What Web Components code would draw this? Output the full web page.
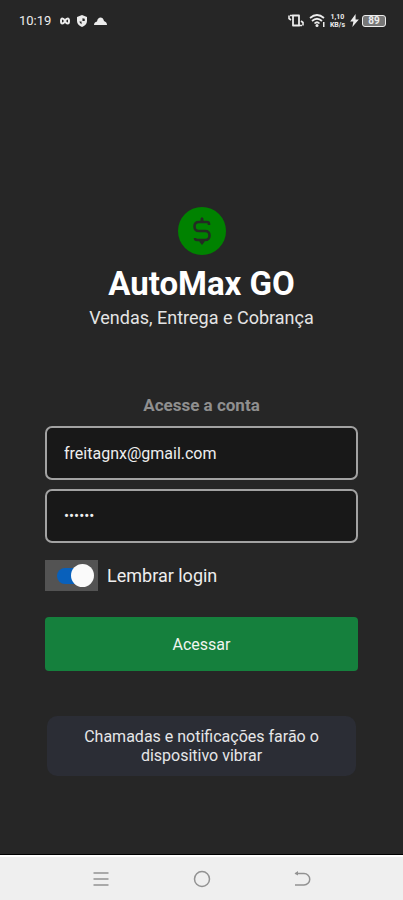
<!DOCTYPE html>
<html lang="pt-BR">
<head>
<meta charset="utf-8">
<meta name="viewport" content="width=device-width, initial-scale=1">
<title>AutoMax GO</title>
<style>
    body {
        margin: 0;
        background: #262626;
        color: #fff;
        font-family: Roboto, "Liberation Sans", sans-serif;
    }
</style>
</head>
<body>
<login-screen></login-screen>
<script>
class StatusBar extends HTMLElement {
    constructor() {
        super();
        this.attachShadow({ mode: 'open' });
        this.shadowRoot.innerHTML = `
            <style>
                :host {
                    display: flex;
                    justify-content: space-between;
                    align-items: center;
                    height: 41px;
                    padding: 0 17px 0 19px;
                    color: #ececec;
                }
                div { display: flex; align-items: center; gap: 5px; }
                .left { gap: 7px; }
                time { font-size: 13px; margin-right: 2px; }
                svg { display: block; fill: currentColor; }
                .rate {
                    flex-direction: column;
                    gap: 0;
                    font-size: 7px;
                    font-weight: bold;
                    line-height: 8px;
                }
                .battery {
                    box-sizing: border-box;
                    width: 24px;
                    height: 12px;
                    border: 1px solid #ececec;
                    border-radius: 3px;
                    background: #777;
                    justify-content: center;
                    font-size: 10px;
                    font-weight: bold;
                }
                .power { gap: 3px; }
            </style>
            <div class="left">
                <time>10:19</time>
                <svg width="10" height="8" viewBox="0 0 10 8"><path fill="none" stroke="currentColor" stroke-width="2" d="M5 4C4 2 3 1.500 2.300 1.500 1.500 1.500 1 2.500 1 4s.5 2.500 1.300 2.500C3 6.500 4 6 5 4s2-2.500 2.700-2.500C8.500 1.500 9 2.500 9 4s-.5 2.500-1.300 2.500C7 6.500 6 6 5 4z"/></svg>
                <svg width="10" height="12" viewBox="0 0 11 13"><path d="M5.500 0 11 2v4.500c0 3-2.500 5.500-5.500 6.500C2.500 12 0 9.500 0 6.500V2z"/><path fill="#262626" d="M6 3.500 8.500 4v2.500H6zM5 7v3C4 9.200 3 8.500 2.600 7z"/></svg>
                <svg width="13" height="8" viewBox="0 0 13 8"><path d="M0 8Q0 5 3 4.500C3.500 1.500 5 .5 6.500.5S9.500 1.500 10 4Q13 5 13 8z"/></svg>
            </div>
            <div>
                <svg width="16" height="13" viewBox="0 0 16 13"><path fill="none" stroke="currentColor" stroke-width="1.800" stroke-linejoin="round" d="M5 1.500h6v10H5z"/><path fill="none" stroke="currentColor" stroke-width="1.600" d="M1 1.500v3L3 6M5 1.500H2M15 11.500v-3L13 7M11 11.500h3"/></svg>
                <svg width="16" height="13" viewBox="0 0 16 13"><path fill="none" stroke="currentColor" stroke-width="1.700" d="M1 4Q8-2 15 4M3 7Q8 2.500 13 7M5.500 9.500Q8 7 10.500 9.500"/><circle cx="8" cy="11.500" r="1.500"/><path d="M14 8h1.500v5H14z"/></svg>
                <div class="rate"><span>1,10</span><span>KB/s</span></div>
                <div class="power">
                    <svg width="9" height="13" viewBox="0 0 8 12"><path d="M5 0 0 7h3l-1 5 6-7H5z"/></svg>
                    <div class="battery">89</div>
                </div>
            </div>
        `;
    }
}

class BrandHeader extends HTMLElement {
    constructor() {
        super();
        this.attachShadow({ mode: 'open' });
        this.shadowRoot.innerHTML = `
            <style>
                :host { display: flex; flex-direction: column; align-items: center; }
                svg { display: block; width: 48px; height: 48px; }
                h1 { margin: 7px 0 0; font-size: 33px; line-height: 44px; }
                p { margin: 0; font-size: 18px; line-height: 24px; color: #e4e4e4; }
            </style>
            <svg viewBox="0 0 48 48" aria-hidden="true">
                <circle cx="24" cy="24" r="24" fill="#008200"/>
                <path fill="none" stroke="#232b23" stroke-width="2.600" stroke-linejoin="round" d="M31 18v-1q0-2-2-2H21q-4.500 0-4.500 4.500T21 24h6q4.500 0 4.500 4.500T27 33H19q-2 0-2-2"/>
                <path fill="#232b23" d="M22.500 15v-3.500L24 10l1.500 1.500V15zM21.500 33h5v2L24 38l-2.500-3z"/>
            </svg>
            <h1><slot name="name"></slot></h1>
            <p><slot></slot></p>
        `;
    }
}

class TextField extends HTMLElement {
    constructor() {
        super();
        this.attachShadow({ mode: 'open' });
    }

    connectedCallback() {
        this.shadowRoot.innerHTML = `
            <style>
                :host { display: block; }
                input {
                    display: block;
                    box-sizing: border-box;
                    width: 100%;
                    height: 54px;
                    padding: 0 17px;
                    border: 2px solid #a2a2a2;
                    border-radius: 7px;
                    outline: none;
                    background: #181818;
                    color: #eee;
                    font: 16px Roboto, "Liberation Sans", sans-serif;
                }
                input[type=password] { font-size: 15px; }
            </style>
            <input type="${this.getAttribute('type')}" value="${this.getAttribute('value')}" aria-label="${this.getAttribute('label')}">
        `;
    }
}

class ToggleSwitch extends HTMLElement {
    constructor() {
        super();
        this.attachShadow({ mode: 'open' });
        this.shadowRoot.innerHTML = `
            <style>
                :host { display: block; }
                label { display: flex; align-items: center; gap: 9px; font-size: 18px; color: #eee; }
                input {
                    appearance: none;
                    display: flex;
                    align-items: center;
                    box-sizing: border-box;
                    width: 53px;
                    height: 31px;
                    margin: 0;
                    padding: 0 4px 0 12px;
                    background: #535353;
                }
                input::before {
                    content: "";
                    width: 26px;
                    height: 16px;
                    border-radius: 8px;
                    background: #0860bb;
                }
                input::after {
                    content: "";
                    width: 23px;
                    height: 23px;
                    margin-left: -12px;
                    border-radius: 50%;
                    flex: none;
                    background: #fafafa;
                }
            </style>
            <label><input type="checkbox" role="switch" checked><slot></slot></label>
        `;
    }
}

class PrimaryButton extends HTMLElement {
    constructor() {
        super();
        this.attachShadow({ mode: 'open' });
        this.shadowRoot.innerHTML = `
            <style>
                :host { display: block; }
                button {
                    display: block;
                    width: 100%;
                    height: 54px;
                    border: 0;
                    border-radius: 4px;
                    background: #15803d;
                    color: #f0f5f0;
                    font: 16px Roboto, "Liberation Sans", sans-serif;
                }
            </style>
            <button type="button"><slot></slot></button>
        `;
    }
}

class ToastMessage extends HTMLElement {
    constructor() {
        super();
        this.attachShadow({ mode: 'open' });
        this.shadowRoot.innerHTML = `
            <style>
                :host {
                    display: block;
                    padding: 11px 32px;
                    border-radius: 10px;
                    background: #2b2d35;
                    color: #e6e6e8;
                    font-size: 16px;
                    line-height: 19px;
                    text-align: center;
                }
            </style>
            <slot></slot>
        `;
    }
}

class NavBar extends HTMLElement {
    constructor() {
        super();
        this.attachShadow({ mode: 'open' });
        this.shadowRoot.innerHTML = `
            <style>
                :host {
                    display: grid;
                    grid-template-columns: repeat(3, 25%);
                    justify-content: center;
                    height: 43px;
                    border-top: 2px solid #fff;
                    background: #efefef;
                    box-shadow: 0 -1px #000;
                }
                button { display: grid; place-items: center; padding: 0; border: 0; background: none; }
                svg { width: 18px; height: 18px; fill: none; stroke: #929292; stroke-width: 1.500; }
            </style>
            <button aria-label="Recentes"><svg viewBox="0 0 18 18"><path d="M1.500 3h15M1.500 9h15M1.500 15h15"/></svg></button>
            <button aria-label="Início"><svg viewBox="0 0 18 18"><circle cx="9" cy="9" r="7.500"/></svg></button>
            <button aria-label="Voltar"><svg viewBox="0 0 18 18"><path d="M2.500 3.500H11a5.700 5.700 0 0 1 0 11.500H2"/><path fill="#929292" stroke="none" d="M1.500 3.500 5 1v4.500z"/></svg></button>
        `;
    }
}

class LoginScreen extends HTMLElement {
    constructor() {
        super();
        this.attachShadow({ mode: 'open' });
        this.shadowRoot.innerHTML = `
            <style>
                :host { display: flex; flex-direction: column; min-height: 100vh; }
                main {
                    flex: 1;
                    display: flex;
                    flex-direction: column;
                    justify-content: center;
                    padding: 87px 45px 0;
                }
                form { display: flex; flex-direction: column; gap: 9px; margin-top: 63px; }
                h2 { margin: 0; font-size: 17px; line-height: 24px; text-align: center; color: #8f8f8f; }
                toggle-switch { margin: 8px 0 17px; }
                toast-message { margin: 45px 2px 0; }
            </style>
            <status-bar></status-bar>
            <main>
                <brand-header><span slot="name">AutoMax GO</span>Vendas, Entrega e Cobrança</brand-header>
                <form>
                    <h2>Acesse a conta</h2>
                    <text-field type="email" label="E-mail" value="freitagnx@gmail.com"></text-field>
                    <text-field type="password" label="Senha" value="123456"></text-field>
                    <toggle-switch>Lembrar login</toggle-switch>
                    <primary-button>Acessar</primary-button>
                </form>
                <toast-message>Chamadas e notificações farão o dispositivo vibrar</toast-message>
            </main>
            <nav-bar></nav-bar>
        `;
    }
}

customElements.define('status-bar', StatusBar);
customElements.define('brand-header', BrandHeader);
customElements.define('text-field', TextField);
customElements.define('toggle-switch', ToggleSwitch);
customElements.define('primary-button', PrimaryButton);
customElements.define('toast-message', ToastMessage);
customElements.define('nav-bar', NavBar);
customElements.define('login-screen', LoginScreen);
</script>
</body>
</html>
